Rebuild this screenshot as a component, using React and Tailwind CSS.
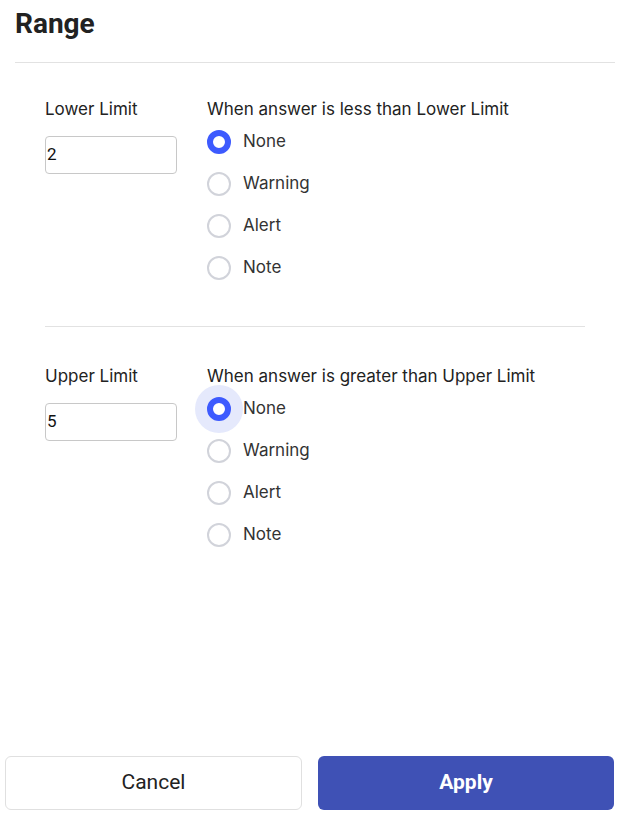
import React from "react";

const inter = { fontFamily: "Inter, Roboto, sans-serif" };

function Radio({ label, checked, halo }) {
  return (
    <div className="flex items-center h-[42px]">
      <div className="relative w-[24px] h-[24px] flex items-center justify-center">
        {halo && (
          <div className="absolute -left-[12px] -top-[12px] w-[48px] h-[48px] rounded-full bg-[#e5e9fc]" />
        )}
        {checked ? (
          <div className="relative w-[24px] h-[24px] rounded-full border-[6px] border-[#3d5afe] bg-white" />
        ) : (
          <div className="relative w-[24px] h-[24px] rounded-full border-[2.5px] border-[#d1d3da] bg-white" />
        )}
      </div>
      <span className="ml-[12px] text-[17px] text-[#333]" style={inter}>{label}</span>
    </div>
  );
}

function Section({ label, value, heading, halo }) {
  return (
    <div className="flex">
      <div className="w-[162px] shrink-0">
        <div className="h-[24px] leading-[24px] text-[17px] text-[#222]" style={inter}>{label}</div>
        <div className="mt-[15px] w-[132px] h-[38px] border border-[#c8c8c8] rounded-[4px] flex items-center pl-[1px] text-[17px] text-[#111]">
          {value}
        </div>
      </div>
      <div>
        <div className="h-[24px] leading-[24px] text-[17px] text-[#222]" style={inter}>{heading}</div>
        <Radio label="None" checked halo={halo} />
        <Radio label="Warning" />
        <Radio label="Alert" />
        <Radio label="Note" />
      </div>
    </div>
  );
}

export default function App() {
  return (
    <div
      className="w-[621px] h-[824px] bg-white flex flex-col"
      style={{ fontFamily: "Roboto, 'Noto Sans', sans-serif" }}
    >
      <div className="pl-[15px] pr-[6px]">
        <div className="h-[63px] border-b border-[#e2e2e2] pt-[6px]">
          <h1 className="text-[28px] font-bold leading-[36px] text-[#222]">Range</h1>
        </div>
      </div>
      <div className="pl-[45px] pt-[34px]">
        <Section
          label="Lower Limit"
          value="2"
          heading="When answer is less than Lower Limit"
        />
      </div>
      <div className="ml-[45px] w-[540px] mt-[37px] border-t border-[#e2e2e2]" />
      <div className="pl-[45px] pt-[37px]">
        <Section
          label="Upper Limit"
          value="5"
          heading="When answer is greater than Upper Limit"
          halo
        />
      </div>
      <div className="mt-auto flex gap-[16px] pl-[5px] pr-[7px] pb-[14px]">
        <button className="w-[297px] h-[54px] rounded-[6px] border border-[#e0e0e0] bg-white text-[21px] text-[#222]">
          Cancel
        </button>
        <button className="w-[296px] h-[54px] rounded-[6px] bg-[#3f51b5] text-[21px] font-bold text-white">
          Apply
        </button>
      </div>
    </div>
  );
}
